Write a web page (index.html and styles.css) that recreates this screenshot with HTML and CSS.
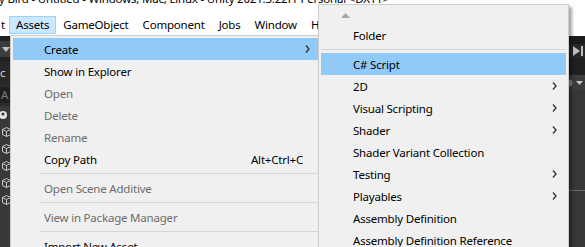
FILE: index.html
```html
<!DOCTYPE html>
<html lang="en">
<head>
  <meta charset="UTF-8">
  <title>Assets menu</title>
  <link rel="stylesheet" href="styles.css">
</head>
<body>
  <div class="titlebar">
    <span class="title-text">y Bird - Untitled - Windows, Mac, Linux - Unity 2021.3.22f1 Personal &lt;DX11&gt;</span>
  </div>

  <nav class="menubar">
    <span class="menubar-item cut">t</span>
    <span class="menubar-item active">Assets</span>
    <span class="menubar-item">GameObject</span>
    <span class="menubar-item">Component</span>
    <span class="menubar-item">Jobs</span>
    <span class="menubar-item">Window</span>
    <span class="menubar-item">Help</span>
  </nav>

  <div class="editor">
    <div class="left-strip">
      <div class="ls-top"></div>
      <div class="ls-bar">
        <svg class="ls-drop" width="8" height="5" viewBox="0 0 8 5"><path d="M0 0h8L4 5z" fill="#c4c4c4"/></svg>
      </div>
      <div class="ls-top"></div>
      <div class="ls-tab">c</div>
      <div class="ls-search"><span class="ls-field">A</span></div>
      <div class="ls-row">
        <svg width="10" height="10" viewBox="0 0 10 10"><circle cx="3" cy="5" r="4" fill="#e6e6e6"/><circle cx="3" cy="4" r="1.6" fill="#383838"/></svg>
      </div>
      <div class="ls-row cube-row"><svg class="cube" width="9" height="10" viewBox="0 0 9 10"><path d="M4.5 .5l4 2v5l-4 2-4-2v-5zM.5 2.5l4 2 4-2M4.5 4.5v5" fill="none" stroke="#c8c8c8"/></svg></div>
      <div class="ls-row cube-row"><svg class="cube" width="9" height="10" viewBox="0 0 9 10"><path d="M4.5 .5l4 2v5l-4 2-4-2v-5zM.5 2.5l4 2 4-2M4.5 4.5v5" fill="none" stroke="#c8c8c8"/></svg></div>
      <div class="ls-row cube-row"><svg class="cube" width="9" height="10" viewBox="0 0 9 10"><path d="M4.5 .5l4 2v5l-4 2-4-2v-5zM.5 2.5l4 2 4-2M4.5 4.5v5" fill="none" stroke="#c8c8c8"/></svg></div>
      <div class="ls-row cube-row"><svg class="cube" width="9" height="10" viewBox="0 0 9 10"><path d="M4.5 .5l4 2v5l-4 2-4-2v-5zM.5 2.5l4 2 4-2M4.5 4.5v5" fill="none" stroke="#c8c8c8"/></svg></div>
      <div class="ls-row cube-row"><svg class="cube" width="9" height="10" viewBox="0 0 9 10"><path d="M4.5 .5l4 2v5l-4 2-4-2v-5zM.5 2.5l4 2 4-2M4.5 4.5v5" fill="none" stroke="#c8c8c8"/></svg></div>
    </div>
    <div class="middle"></div>
    <div class="right-strip">
      <div class="rs-top"></div>
      <div class="rs-toolbar">
        <svg width="11" height="10" viewBox="0 0 11 10"><path d="M0 0l7 5-7 5z M8 0h2v10H8z" fill="#bdbdbd"/></svg>
      </div>
      <div class="rs-dark"></div>
      <div class="rs-header">
        <svg width="16" height="8" viewBox="0 0 16 8"><circle cx="0" cy="4" r="3.5" fill="#8a8a8a"/><path d="M7 2h7l-3.5 4z" fill="#c4c4c4"/></svg>
      </div>
      <div class="rs-grid"></div>
      <div class="rs-line"></div>
      <div class="rs-grid rest"></div>
    </div>
  </div>

  <div class="menu main-menu">
    <div class="menu-row hover"><span>Create</span><svg class="arrow" width="5" height="8" viewBox="0 0 5 8"><path d="M1 .5l3 3.5-3 3.5" fill="none" stroke="#333" stroke-width="1.3"/></svg></div>
    <div class="menu-row"><span>Show in Explorer</span></div>
    <div class="menu-row disabled"><span>Open</span></div>
    <div class="menu-row disabled"><span>Delete</span></div>
    <div class="menu-row disabled"><span>Rename</span></div>
    <div class="menu-row"><span>Copy Path</span><span class="shortcut">Alt+Ctrl+C</span></div>
    <div class="menu-sep"></div>
    <div class="menu-row disabled"><span>Open Scene Additive</span></div>
    <div class="menu-sep"></div>
    <div class="menu-row disabled"><span>View in Package Manager</span></div>
    <div class="menu-sep"></div>
    <div class="menu-row"><span>Import New Asset...</span></div>
  </div>

  <div class="menu sub-menu">
    <div class="scroll-up">
      <svg width="9" height="5" viewBox="0 0 9 5"><path d="M0 5h9L4.5 0z" fill="#a6a6a6"/></svg>
    </div>
    <div class="menu-row"><span>Folder</span></div>
    <div class="menu-sep full"></div>
    <div class="menu-row hover"><span>C# Script</span></div>
    <div class="menu-row"><span>2D</span><svg class="arrow" width="5" height="8" viewBox="0 0 5 8"><path d="M1 .5l3 3.5-3 3.5" fill="none" stroke="#333" stroke-width="1.3"/></svg></div>
    <div class="menu-row"><span>Visual Scripting</span><svg class="arrow" width="5" height="8" viewBox="0 0 5 8"><path d="M1 .5l3 3.5-3 3.5" fill="none" stroke="#333" stroke-width="1.3"/></svg></div>
    <div class="menu-row"><span>Shader</span><svg class="arrow" width="5" height="8" viewBox="0 0 5 8"><path d="M1 .5l3 3.5-3 3.5" fill="none" stroke="#333" stroke-width="1.3"/></svg></div>
    <div class="menu-row"><span>Shader Variant Collection</span></div>
    <div class="menu-row"><span>Testing</span><svg class="arrow" width="5" height="8" viewBox="0 0 5 8"><path d="M1 .5l3 3.5-3 3.5" fill="none" stroke="#333" stroke-width="1.3"/></svg></div>
    <div class="menu-row"><span>Playables</span><svg class="arrow" width="5" height="8" viewBox="0 0 5 8"><path d="M1 .5l3 3.5-3 3.5" fill="none" stroke="#333" stroke-width="1.3"/></svg></div>
    <div class="menu-row"><span>Assembly Definition</span></div>
    <div class="menu-row"><span>Assembly Definition Reference</span></div>
  </div>
</body>
</html>
```

FILE: styles.css
```css
body {
  margin: 0;
  width: 585px;
  height: 247px;
  overflow: hidden;
  background: #fff;
  font-family: "Noto Sans", sans-serif;
  font-size: 11.5px;
  letter-spacing: -0.2px;
  color: #000;
  position: relative;
}
.titlebar {
  height: 14px;
  overflow: hidden;
  white-space: nowrap;
}
.title-text {
  display: block;
  margin-top: -10px;
  margin-left: -1px;
  line-height: 18px;
}
.menubar {
  height: 22px;
  display: flex;
  align-items: center;
  white-space: nowrap;
}
.menubar-item {
  box-sizing: border-box;
  height: 18px;
  line-height: 16px;
  padding: 0 6px;
  border: 1px solid transparent;
}
.menubar-item.cut {
  width: 9px;
  padding: 0;
  overflow: hidden;
}
.menubar-item.active {
  background: #cce8ff;
  border-color: #99d1ff;
}
.editor {
  height: 211px;
  display: flex;
  background: #383838;
}
.left-strip {
  width: 40px;
  background: #383838;
}
.ls-top {
  height: 5px;
  background: #222;
}
.ls-bar {
  height: 16px;
  background: #3c3c3c;
  display: flex;
  align-items: center;
  padding-left: 2px;
}
.ls-tab {
  height: 22px;
  line-height: 22px;
  background: #282828;
  color: #d8d8d8;
}
.ls-search {
  height: 22px;
  background: #2b2b2b;
  display: flex;
  align-items: center;
}
.ls-field {
  height: 16px;
  line-height: 16px;
  width: 30px;
  padding-left: 1px;
  background: #1f1f1f;
  color: #7d7d7d;
}
.ls-row {
  height: 17px;
  display: flex;
  align-items: center;
}
.cube-row {
  padding-left: 2px;
}
.middle {
  flex: 1;
}
.right-strip {
  width: 16px;
  display: flex;
  flex-direction: column;
}
.rs-top {
  height: 8px;
  background: #1b1b1b;
}
.rs-toolbar {
  height: 14px;
  background: #282828;
  display: flex;
  align-items: center;
  padding-left: 4px;
}
.rs-dark {
  height: 17px;
  background: #202020;
}
.rs-header {
  height: 15px;
  background: #3c3c3c;
  display: flex;
  align-items: center;
}
.rs-grid {
  height: 100px;
  background: #383838 repeating-linear-gradient(to bottom, #383838 0 15px, #333 15px 16px);
}
.rs-grid.rest {
  flex: 1;
}
.rs-line {
  height: 1px;
  background: #6a6a6a;
}
.menu {
  position: absolute;
  box-sizing: border-box;
  background: #f0f0f0;
  border: 1px solid #cccccc;
  padding: 2px;
  white-space: nowrap;
  overflow: hidden;
}
.main-menu {
  left: 10px;
  top: 35px;
  width: 312px;
  height: 212px;
  border-bottom: 0;
}
.sub-menu {
  left: 318px;
  top: 4px;
  width: 251px;
  height: 243px;
  border-bottom: 0;
  box-shadow: 3px 3px 3px rgba(0, 0, 0, 0.35);
}
.menu-row {
  height: 22px;
  display: flex;
  align-items: center;
  justify-content: space-between;
  padding: 0 9px 0 31px;
}
.sub-menu .menu-row {
  padding-left: 32px;
}
.menu-row.hover {
  background: #91c9f7;
}
.menu-row.disabled {
  color: #6d6d6d;
}
.shortcut {
  margin-right: 7px;
}
.menu-sep {
  height: 1px;
  margin: 3px 0 3px 27px;
  background: #d7d7d7;
}
.menu-sep.full {
  margin-left: 0;
}
.scroll-up {
  height: 17px;
  display: flex;
  align-items: center;
  padding-left: 20px;
}
```
